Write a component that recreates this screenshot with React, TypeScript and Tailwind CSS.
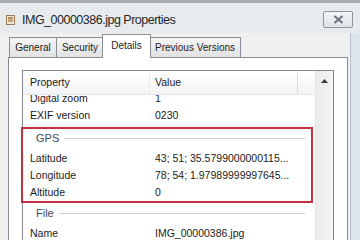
import React from "react";

const font = { fontFamily: '"Liberation Sans", Arial, sans-serif' };

function Row({ label, value }: { label: string; value: string }) {
  return (
    <div className="grid h-[17px] grid-cols-[127px_148px_17px] items-center text-[10.5px] leading-[17px] text-[#1b1b1b]">
      <div className="truncate pl-[7px]">{label}</div>
      <div className="whitespace-nowrap pl-[5px]">{value}</div>
      <div />
    </div>
  );
}

function Group({ title, h, mt }: { title: string; h: string; mt: string }) {
  return (
    <div className={`${h} flex items-start`}>
      <div className={`${mt} flex w-full items-center pl-[13px] pr-[10px]`}>
        <span className="text-[11px] leading-[17px] text-[#3d4a5c]">{title}</span>
        <div className="ml-[5px] h-px flex-1 bg-[#cfd4da]" />
      </div>
    </div>
  );
}

export default function App() {
  return (
    <div className="relative flex h-[240px] w-[360px] flex-col overflow-hidden bg-[#e8ebee]" style={font}>
      <div className="h-[3px] shrink-0 bg-[#a7abb0]" />
      {/* title bar */}
      <div className="flex h-[30px] shrink-0 items-start pl-[6px] pr-[7px]">
        <svg width="9" height="10" viewBox="0 0 9 10" className="mt-[12px]">
          <rect x="0.5" y="0.5" width="8" height="9" fill="#f4e9d8" stroke="#9a7a5a" />
          <rect x="2" y="3" width="5" height="4" fill="#c9a27a" />
          <rect x="2" y="2" width="5" height="1" fill="#b08060" />
        </svg>
        <span className="ml-[7px] mt-[10px] text-[12.5px] leading-[15px] tracking-[-0.5px] text-[#262626]">
          IMG_00000386.jpg Properties
        </span>
        <div className="ml-auto mt-[8px] flex h-[17px] w-[30px] items-center justify-center rounded-[2px] border border-[#8e949b] bg-gradient-to-b from-[#f2f4f6] to-[#dfe3e8]">
          <svg width="11" height="9" viewBox="0 0 11 9">
            <path d="M1.5 1 L9.5 8 M9.5 1 L1.5 8" stroke="#6b7178" strokeWidth="2" />
          </svg>
        </div>
      </div>
      {/* body */}
      <div className="flex min-h-0 flex-1 overflow-hidden">
        <div className="flex flex-1 flex-col bg-[#f0f0f0] pl-[8px] pr-[2px]">
          {/* tabs */}
          <div className="flex h-[24px] shrink-0 items-end pl-px text-[10px] text-[#1b1b1b]">
            <div className="flex h-[20px] w-[48px] items-center justify-center border border-b-0 border-[#898c95] bg-gradient-to-b from-[#f5f5f5] to-[#e2e2e2]">General</div>
            <div className="flex h-[20px] w-[47px] items-center justify-center border border-b-0 border-l-0 border-[#898c95] bg-gradient-to-b from-[#f5f5f5] to-[#e2e2e2]">Security</div>
            <div className="relative z-10 -mb-px -ml-[2px] flex h-[24px] w-[49px] items-start justify-center border border-b-0 border-[#898c95] bg-white pt-[3px]">Details</div>
            <div className="-ml-[1px] flex h-[20px] w-[91px] items-center justify-center border border-b-0 border-l-0 border-[#898c95] bg-gradient-to-b from-[#f5f5f5] to-[#e2e2e2]">Previous Versions</div>
          </div>
          {/* panel */}
          <div className="min-h-0 flex-1 overflow-hidden border border-b-0 border-[#898c95] bg-white pl-[13px] pt-[12px]">
            <div className="flex h-[200px] w-[312px] border border-[#828790]">
              <div className="flex flex-1 flex-col overflow-hidden">
                <div className="grid h-[24px] shrink-0 grid-cols-[127px_148px_17px] border-b border-[#e3e5e8] bg-gradient-to-b from-white to-[#f3f4f6] text-[10.5px] leading-[23px] text-[#1b1b1b]">
                  <div className="border-r border-[#e8eaec] pl-[7px]">Property</div>
                  <div className="border-r border-[#dcdfe2] pl-[5px]">Value</div>
                  <div />
                </div>
                <div className="flex-1 overflow-hidden">
                  <div className="-mt-[5px]">
                    <Row label="Digital zoom" value="1" />
                    <Row label="EXIF version" value="0230" />
                    <Group title="GPS" h="h-[26px]" mt="mt-[6px]" />
                    <Row label="Latitude" value="43; 51; 35.5799000000115..." />
                    <Row label="Longitude" value="78; 54; 1.97989999997645..." />
                    <Row label="Altitude" value="0" />
                    <Group title="File" h="h-[24px]" mt="mt-[4px]" />
                    <Row label="Name" value="IMG_00000386.jpg" />
                  </div>
                </div>
              </div>
              <div className="flex w-[18px] flex-col border-l border-[#e6e6e6] bg-gradient-to-r from-[#ececec] to-[#f4f4f4]">
                <div className="flex h-[20px] items-center justify-center">
                  <svg width="7" height="4" viewBox="0 0 7 4">
                    <path d="M0 4 L3.5 0 L7 4 Z" fill="#3a3a3a" />
                  </svg>
                </div>
              </div>
            </div>
          </div>
        </div>
        <div className="w-[10px] border-l border-[#b9c0c7] bg-[#dde5ec]" />
      </div>
      {/* red annotation box */}
      <div className="absolute left-[21px] top-[127px] h-[76px] w-[292px] border-2 border-[#c1323e]" />
    </div>
  );
}
